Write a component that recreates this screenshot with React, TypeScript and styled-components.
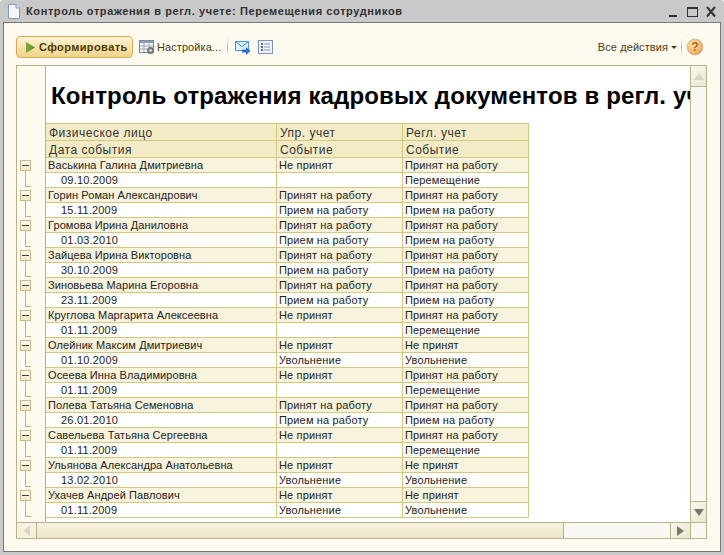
import styled, { createGlobalStyle } from "styled-components";

const rows = [
  { name: "Васькина Галина Дмитриевна", date: "09.10.2009", a1: "Не принят", a2: "", b1: "Принят на работу", b2: "Перемещение" },
  { name: "Горин Роман Александрович", date: "15.11.2009", a1: "Принят на работу", a2: "Прием на работу", b1: "Принят на работу", b2: "Прием на работу" },
  { name: "Громова Ирина Даниловна", date: "01.03.2010", a1: "Принят на работу", a2: "Прием на работу", b1: "Принят на работу", b2: "Прием на работу" },
  { name: "Зайцева Ирина Викторовна", date: "30.10.2009", a1: "Принят на работу", a2: "Прием на работу", b1: "Принят на работу", b2: "Прием на работу" },
  { name: "Зиновьева Марина Егоровна", date: "23.11.2009", a1: "Принят на работу", a2: "Прием на работу", b1: "Принят на работу", b2: "Прием на работу" },
  { name: "Круглова Маргарита Алексеевна", date: "01.11.2009", a1: "Не принят", a2: "", b1: "Принят на работу", b2: "Перемещение" },
  { name: "Олейник Максим Дмитриевич", date: "01.10.2009", a1: "Не принят", a2: "Увольнение", b1: "Не принят", b2: "Увольнение" },
  { name: "Осеева Инна Владимировна", date: "01.11.2009", a1: "Не принят", a2: "", b1: "Принят на работу", b2: "Перемещение" },
  { name: "Полева Татьяна Семеновна", date: "26.01.2010", a1: "Принят на работу", a2: "Прием на работу", b1: "Принят на работу", b2: "Прием на работу" },
  { name: "Савельева Татьяна Сергеевна", date: "01.11.2009", a1: "Не принят", a2: "", b1: "Принят на работу", b2: "Перемещение" },
  { name: "Ульянова Александра Анатольевна", date: "13.02.2010", a1: "Не принят", a2: "Увольнение", b1: "Не принят", b2: "Увольнение" },
  { name: "Ухачев Андрей Павлович", date: "01.11.2009", a1: "Не принят", a2: "Увольнение", b1: "Не принят", b2: "Увольнение" },
];

const GlobalStyle = createGlobalStyle`
  html, body {
    margin: 0;
    padding: 0;
    background: #fff;
  }
  * {
    box-sizing: border-box;
  }
`;

const Window = styled.div`
  width: 724px;
  height: 555px;
  background: #c9c9c9;
  border-radius: 3px 3px 0 0;
  display: flex;
  flex-direction: column;
  font-family: "Liberation Sans", Arial, sans-serif;
  color: #222;
`;

const TitleBar = styled.div`
  height: 22px;
  display: flex;
  align-items: center;
  padding: 0 8px 0 8px;
  flex-shrink: 0;
`;

const TitleText = styled.div`
  margin-left: 6px;
  flex: 1;
  font-size: 11px;
  font-weight: 700;
  letter-spacing: 0.6px;
  color: #303030;
  white-space: nowrap;
`;

const WinButtons = styled.div`
  display: flex;
  align-items: center;
  gap: 8px;
`;

const Frame = styled.div`
  flex: 1;
  min-height: 0;
  margin: 0 3px 3px;
  background: #fefaef;
  border: 1px solid #777;
  padding: 13px 13px 12px 12px;
  display: flex;
  flex-direction: column;
`;

const Toolbar = styled.div`
  height: 22px;
  display: flex;
  align-items: center;
  flex-shrink: 0;
  margin-bottom: 7px;
  padding-right: 3px;
`;

const PrimaryButton = styled.div`
  width: 117px;
  height: 22px;
  display: flex;
  align-items: center;
  gap: 3px;
  padding-left: 8px;
  border: 1px solid #d4ad55;
  border-radius: 4px;
  background: linear-gradient(#fdf3d5, #f7e3ae 50%, #f0d48d);
  font-size: 11px;
  font-weight: 700;
  letter-spacing: 0.4px;
  color: #4c3b04;
`;

const ToolLabel = styled.span<{ $ml?: number }>`
  margin-left: ${(p) => p.$ml ?? 0}px;
  font-size: 11px;
  letter-spacing: 0.08px;
  color: #4a3c10;
  white-space: nowrap;
`;

const ToolIcon = styled.span<{ $ml: number }>`
  display: flex;
  margin-left: ${(p) => p.$ml}px;
`;

const Separator = styled.span<{ $ml: number }>`
  width: 1px;
  height: 20px;
  margin-left: ${(p) => p.$ml}px;
  background: linear-gradient(#fefaef, #bdb89e 50%, #fefaef);
`;

const Spacer = styled.div`
  flex: 1;
`;

const Caret = styled.span`
  width: 0;
  height: 0;
  margin-left: 3px;
  border-left: 3px solid transparent;
  border-right: 3px solid transparent;
  border-top: 3px solid #4a3c10;
`;

const Panel = styled.div`
  flex: 1;
  min-height: 0;
  display: grid;
  grid-template-columns: 1fr 16px;
  grid-template-rows: 1fr 16px;
  border: 1px solid #b9b28a;
  background: #fff;
`;

const DocArea = styled.div`
  display: flex;
  min-width: 0;
  min-height: 0;
  overflow: hidden;
`;

const Gutter = styled.div`
  width: 28px;
  flex-shrink: 0;
  padding: 91px 0 0 3px;
  background: #fefaef;
`;

const Group = styled.div`
  height: 30px;
  padding-top: 3px;
`;

const MinusBox = styled.div`
  width: 11px;
  height: 11px;
  border: 1px solid #c8b98a;
  background: linear-gradient(#fffdf5, #f0e8c8);
  display: flex;
  align-items: center;
  justify-content: center;
  &::before {
    content: "";
    width: 7px;
    height: 1px;
    background: #444;
  }
`;

const Connector = styled.div`
  width: 6px;
  height: 16px;
  margin-left: 5px;
  border-left: 1px solid #bdb078;
  border-bottom: 1px solid #bdb078;
`;

const Sheet = styled.div`
  flex: 1;
  min-width: 0;
  overflow: hidden;
  border-left: 1px solid #b9b28a;
`;

const Heading = styled.h1`
  margin: 0;
  height: 57px;
  padding: 3px 0 0 5px;
  display: flex;
  align-items: center;
  font-size: 24px;
  font-weight: 700;
  letter-spacing: 0.14px;
  color: #000;
  white-space: nowrap;
`;

const Grid = styled.table`
  border-collapse: collapse;
  table-layout: fixed;
  width: 483px;
  margin-left: -1px;
`;

const HeadCell = styled.th<{ $w?: number }>`
  width: ${(p) => (p.$w ? `${p.$w}px` : "auto")};
  height: 17px;
  padding: 1px 0 0 3px;
  border: 1px solid #d5c684;
  background: #f3ebc6;
  font-size: 12px;
  line-height: 14px;
  font-weight: 400;
  letter-spacing: 0.5px;
  text-align: left;
  color: #333;
  white-space: nowrap;
  overflow: hidden;
`;

const Cell = styled.td<{ $kind: "name" | "date" | "plain"; $odd: boolean }>`
  height: 15px;
  padding: 0 0 0 ${(p) => (p.$kind === "date" ? 15 : 2)}px;
  border: 1px solid #d5c684;
  background: ${(p) => (p.$odd ? "#f8f3dc" : "#fff")};
  font-size: 11px;
  line-height: 13px;
  letter-spacing: ${(p) => (p.$kind === "date" ? 0.2 : p.$kind === "name" ? 0.09 : 0.15)}px;
  color: #222;
  white-space: nowrap;
  overflow: hidden;
`;

const VScroll = styled.div`
  border-left: 1px solid #b9b28a;
  background: #f9f8f2;
  display: flex;
  flex-direction: column;
  justify-content: space-between;
`;

const HScroll = styled.div`
  grid-column: 1 / 3;
  border-top: 1px solid #b9b28a;
  background: #f9f8f2;
  display: flex;
`;

const ScrollBtn = styled.div<{ $dir: "up" | "down" | "left" | "right" }>`
  display: flex;
  align-items: center;
  justify-content: center;
  flex-shrink: 0;
  width: ${(p) => (p.$dir === "left" ? "20px" : p.$dir === "right" ? "21px" : "auto")};
  height: ${(p) => (p.$dir === "up" || p.$dir === "down" ? "21px" : "auto")};
  background: ${(p) =>
    p.$dir === "left" ? "#f4f1de" : "linear-gradient(135deg, #faf8ee, #ece6cc)"};
  border-left: ${(p) => (p.$dir === "right" ? "1px solid #b9b28a" : "none")};
  border-right: ${(p) => (p.$dir === "left" || p.$dir === "right" ? "1px solid #b9b28a" : "none")};
  border-top: ${(p) => (p.$dir === "down" ? "1px solid #b9b28a" : "none")};
  border-bottom: ${(p) => (p.$dir === "up" ? "1px solid #b9b28a" : "none")};
  &::before {
    content: "";
    width: 0;
    height: 0;
    border-style: solid;
    border-color: transparent;
    border-width: ${(p) =>
      p.$dir === "up" || p.$dir === "down" ? "7px 5px" : "5px 7px"};
    ${(p) =>
      p.$dir === "up" ? "border-bottom-color: #d9d6c4; border-top-width: 0;" : ""}
    ${(p) =>
      p.$dir === "down" ? "border-top-color: #77766c; border-bottom-width: 0;" : ""}
    ${(p) =>
      p.$dir === "left" ? "border-right-color: #d9d6c4; border-left-width: 0;" : ""}
    ${(p) =>
      p.$dir === "right" ? "border-left-color: #77766c; border-right-width: 0;" : ""}
  }
`;

const Thumb = styled.div`
  width: 527px;
  flex-shrink: 0;
  border-right: 1px solid #b9b28a;
  background: linear-gradient(#f7f3df, #ebe4c4);
`;

const TrackFill = styled.div`
  flex: 1;
`;

const Corner = styled.div`
  width: 15px;
  flex-shrink: 0;
`;

const DocIcon = () => (
  <svg width="12" height="15" viewBox="0 0 12 15">
    <path d="M.5.5h7.5l3.500 3.500v10.500h-11z" fill="#f4f8fd" stroke="#7f9db9" />
    <path d="M8 .5v3.500h3.500" fill="#d5e2f0" stroke="#7f9db9" />
  </svg>
);

const Minimize = () => (
  <svg width="10" height="13" viewBox="0 0 10 13">
    <rect x="0" y="10" width="8" height="2" fill="#333" />
  </svg>
);

const Maximize = () => (
  <svg width="11" height="13" viewBox="0 0 11 13">
    <rect x=".5" y="2.500" width="10" height="9" fill="none" stroke="#333" />
    <rect x="0" y="2" width="11" height="2" fill="#333" />
  </svg>
);

const CloseX = () => (
  <svg width="10" height="13" viewBox="0 0 10 13">
    <path d="M1 2l8 9.500M9 2l-8 9.500" stroke="#333" strokeWidth="2" />
  </svg>
);

const PlayIcon = () => (
  <svg width="11" height="13" viewBox="0 0 11 13">
    <defs>
      <linearGradient id="play" x1="0" y1="0" x2="1" y2="0">
        <stop offset="0" stopColor="#8fa83a" />
        <stop offset="1" stopColor="#3f9a2a" />
      </linearGradient>
    </defs>
    <path d="M1 1l9 5.500-9 5.500z" fill="url(#play)" />
  </svg>
);

const SettingsIcon = () => (
  <svg width="16" height="16" viewBox="0 0 16 16">
    <rect x=".5" y="1.500" width="14" height="12" fill="#f2f4f8" stroke="#7c8aa0" />
    <rect x="1" y="2" width="13" height="2" fill="#8a9ab5" />
    <path d="M5 2v11M10 2v11M1 7h13M1 10h13" stroke="#9aa7bb" />
    <circle cx="11.500" cy="11.500" r="3.500" fill="#777" />
    <circle cx="11.500" cy="11.500" r="1.300" fill="#eee" />
  </svg>
);

const MailIcon = () => (
  <svg width="16" height="15" viewBox="0 0 16 15">
    <rect x=".5" y="1.500" width="13" height="9" fill="#dff0fc" stroke="#4a9ce0" />
    <path d="M1 2l6 4.500L13 2" fill="none" stroke="#3f8fd8" />
    <path d="M7 9.500h4V7l4.500 4-4.500 4v-2.500H7z" fill="#2f6fc4" />
  </svg>
);

const ListIcon = () => (
  <svg width="15" height="14" viewBox="0 0 15 14">
    <rect x=".5" y=".5" width="14" height="13" fill="#eef1f8" stroke="#7f93bd" />
    <rect x="3" y="3" width="2" height="2" fill="#5b6fa0" />
    <rect x="3" y="6" width="2" height="2" fill="#5b6fa0" />
    <rect x="3" y="9" width="2" height="2" fill="#5b6fa0" />
    <path d="M6 4h6M6 7h6M6 10h6" stroke="#8b9abd" />
  </svg>
);

const HelpIcon = () => (
  <svg width="18" height="18" viewBox="0 0 18 18">
    <defs>
      <radialGradient id="help" cx="0.4" cy="0.35" r="0.7">
        <stop offset="0" stopColor="#fde6b4" />
        <stop offset="1" stopColor="#ee9f45" />
      </radialGradient>
    </defs>
    <circle cx="9" cy="9" r="8" fill="url(#help)" stroke="#c9c2ae" />
    <text x="9" y="13" fontFamily="Liberation Sans" fontSize="12" fontWeight="700" fill="#a9661c" textAnchor="middle">?</text>
  </svg>
);

const App = () => {
  return (
    <Window>
      <GlobalStyle />
      <TitleBar>
        <DocIcon />
        <TitleText>Контроль отражения в регл. учете: Перемещения сотрудников</TitleText>
        <WinButtons>
          <Minimize />
          <Maximize />
          <CloseX />
        </WinButtons>
      </TitleBar>
      <Frame>
        <Toolbar>
          <PrimaryButton>
            <PlayIcon />
            Сформировать
          </PrimaryButton>
          <ToolIcon $ml={6}>
            <SettingsIcon />
          </ToolIcon>
          <ToolLabel $ml={2}>Настройка...</ToolLabel>
          <Separator $ml={6} />
          <ToolIcon $ml={7}>
            <MailIcon />
          </ToolIcon>
          <ToolIcon $ml={7}>
            <ListIcon />
          </ToolIcon>
          <Spacer />
          <ToolLabel>Все действия</ToolLabel>
          <Caret />
          <Separator $ml={4} />
          <ToolIcon $ml={4}>
            <HelpIcon />
          </ToolIcon>
        </Toolbar>
        <Panel>
          <DocArea>
            <Gutter>
              {rows.map((r) => (
                <Group key={r.name}>
                  <MinusBox />
                  <Connector />
                </Group>
              ))}
            </Gutter>
            <Sheet>
              <Heading>Контроль отражения кадровых документов в регл. учете</Heading>
              <Grid>
                <thead>
                  <tr>
                    <HeadCell $w={231}>Физическое лицо</HeadCell>
                    <HeadCell $w={126}>Упр. учет</HeadCell>
                    <HeadCell $w={126}>Регл. учет</HeadCell>
                  </tr>
                  <tr>
                    <HeadCell>Дата события</HeadCell>
                    <HeadCell>Событие</HeadCell>
                    <HeadCell>Событие</HeadCell>
                  </tr>
                </thead>
                <tbody>
                  {rows.flatMap((r) => [
                    <tr key={r.name}>
                      <Cell $kind="name" $odd>{r.name}</Cell>
                      <Cell $kind="plain" $odd>{r.a1}</Cell>
                      <Cell $kind="plain" $odd>{r.b1}</Cell>
                    </tr>,
                    <tr key={r.name + "-date"}>
                      <Cell $kind="date" $odd={false}>{r.date}</Cell>
                      <Cell $kind="plain" $odd={false}>{r.a2}</Cell>
                      <Cell $kind="plain" $odd={false}>{r.b2}</Cell>
                    </tr>,
                  ])}
                </tbody>
              </Grid>
            </Sheet>
          </DocArea>
          <VScroll>
            <ScrollBtn $dir="up" />
            <ScrollBtn $dir="down" />
          </VScroll>
          <HScroll>
            <ScrollBtn $dir="left" />
            <Thumb />
            <TrackFill />
            <ScrollBtn $dir="right" />
            <Corner />
          </HScroll>
        </Panel>
      </Frame>
    </Window>
  );
};

export default App;
